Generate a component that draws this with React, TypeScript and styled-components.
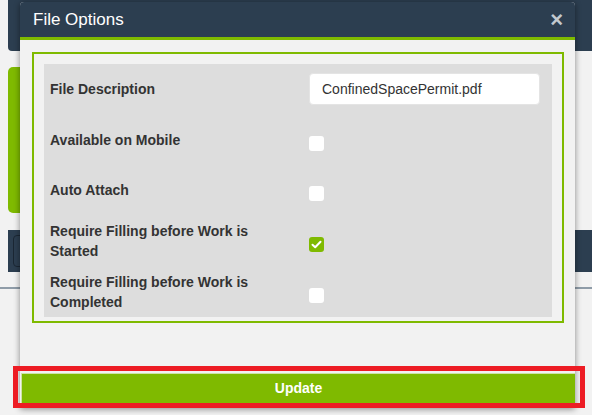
import * as React from 'react';
import styled, { createGlobalStyle } from 'styled-components';

const GlobalStyle = createGlobalStyle`
  html, body {
    margin: 0;
    padding: 0;
  }
  body {
    background: #f2f2f2;
    font-family: "Liberation Sans", Arial, sans-serif;
    overflow: hidden;
  }
`;

const Page = styled.div`
  position: relative;
  width: 592px;
  height: 415px;
  overflow: hidden;
  background: #f2f2f2;
`;

// page behind the dialog
const Backdrop = styled.div`
  display: flex;
  flex-direction: column;
  padding-left: 8px;
`;

const TopBar = styled.div`
  height: 51px;
  background: #2c3e50;
  border-bottom-left-radius: 4px;
`;

const GreenCard = styled.div`
  margin-top: 16px;
  width: 520px;
  height: 146px;
  background: #7fba00;
  border-radius: 5px;
`;

const ToolStrip = styled.div`
  margin-top: 17px;
  height: 42px;
  background: #2c3e50;
  display: flex;
  align-items: center;
  padding-left: 5px;
`;

const ToolButton = styled.div`
  width: 120px;
  height: 30px;
  border: 1px solid #1b2734;
  border-radius: 4px;
`;

const Divider = styled.div`
  margin: 15px 0 0 -8px;
  height: 2px;
  background: #8f9ca8;
`;

// dialog
const Modal = styled.div`
  position: absolute;
  top: 2px;
  left: 20px;
  width: 555px;
  background: #f2f2f2;
  border-radius: 4px 4px 0 0;
  box-shadow: 0 1px 6px rgba(0, 0, 0, 0.45);
`;

const Header = styled.div`
  height: 35px;
  display: flex;
  align-items: center;
  justify-content: space-between;
  padding: 0 12px 0 13px;
  background: #2c3e50;
  border-bottom: 3px solid #7fba00;
  border-radius: 4px 4px 0 0;
`;

const Title = styled.h4`
  margin: 0;
  color: #ffffff;
  font-size: 17px;
  font-weight: normal;
`;

const Close = styled.span`
  color: #c3c9cf;
  font-size: 22px;
  font-weight: bold;
  line-height: 1;
`;

const Body = styled.div`
  padding: 12px 11px 42px 12px;
`;

const OptionsBox = styled.div`
  border: 2px solid #7fba00;
  padding: 10px 10px 4px 10px;
`;

const OptionsTable = styled.div`
  background: #dddddd;
  display: flex;
  flex-direction: column;
`;

const Row = styled.div`
  height: 50.6px;
  display: grid;
  grid-template-columns: 265px 1fr;
  align-items: center;
`;

const Label = styled.div`
  padding-left: 6px;
  max-width: 240px;
  color: #333333;
  font-size: 14px;
  font-weight: bold;
  line-height: 20px;
`;

const TextInput = styled.input`
  box-sizing: border-box;
  width: 231px;
  height: 32px;
  padding: 0 12px;
  border: 1px solid #e4e4e4;
  border-radius: 4px;
  background: #ffffff;
  color: #333333;
  font-family: "Liberation Sans", Arial, sans-serif;
  font-size: 14px;
  outline: none;
`;

const Box = styled.span<{ $checked?: boolean }>`
  display: flex;
  align-items: center;
  justify-content: center;
  width: 15px;
  height: 15px;
  margin-top: 7px;
  border-radius: 3px;
  background: ${(p) => (p.$checked ? '#7fba00' : '#ffffff')};
`;

const Footer = styled.div`
  position: relative;
  padding: 8px 0 5px 1px;
`;

const UpdateButton = styled.button`
  display: block;
  width: 554px;
  height: 30px;
  border: none;
  border-top: 1px solid #cfe3a6;
  border-left: 1px solid #cfe3a6;
  background: #7fba00;
  color: #ffffff;
  font-family: "Liberation Sans", Arial, sans-serif;
  font-size: 14px;
  font-weight: bold;
`;

const Highlight = styled.div`
  position: absolute;
  top: 1px;
  left: -7px;
  width: 572px;
  height: 42px;
  box-sizing: border-box;
  border: 5px solid #ed1c24;
  pointer-events: none;
`;

function Checkbox({ checked }: { checked?: boolean }) {
  return (
    <Box $checked={checked}>
      {checked && (
        <svg width="11" height="11" viewBox="0 0 11 11">
          <polyline
            points="1.5,5.8 4.2,8.3 9.5,2.8"
            fill="none"
            stroke="#ffffff"
            strokeWidth="2"
            strokeLinecap="round"
            strokeLinejoin="round"
          />
        </svg>
      )}
    </Box>
  );
}

const options = [
  { label: 'Available on Mobile', checked: false },
  { label: 'Auto Attach', checked: false },
  { label: 'Require Filling before Work is Started', checked: true },
  { label: 'Require Filling before Work is Completed', checked: false },
];

export default function App() {
  return (
    <Page>
      <GlobalStyle />
      <Backdrop>
        <TopBar />
        <GreenCard />
        <ToolStrip>
          <ToolButton />
        </ToolStrip>
        <Divider />
      </Backdrop>

      <Modal>
        <Header>
          <Title>File Options</Title>
          <Close>×</Close>
        </Header>
        <Body>
          <OptionsBox>
            <OptionsTable>
              <Row>
                <Label>File Description</Label>
                <TextInput readOnly value="ConfinedSpacePermit.pdf" />
              </Row>
              {options.map((o) => (
                <Row key={o.label}>
                  <Label>{o.label}</Label>
                  <Checkbox checked={o.checked} />
                </Row>
              ))}
            </OptionsTable>
          </OptionsBox>
        </Body>
        <Footer>
          <UpdateButton>Update</UpdateButton>
          <Highlight />
        </Footer>
      </Modal>
    </Page>
  );
}
